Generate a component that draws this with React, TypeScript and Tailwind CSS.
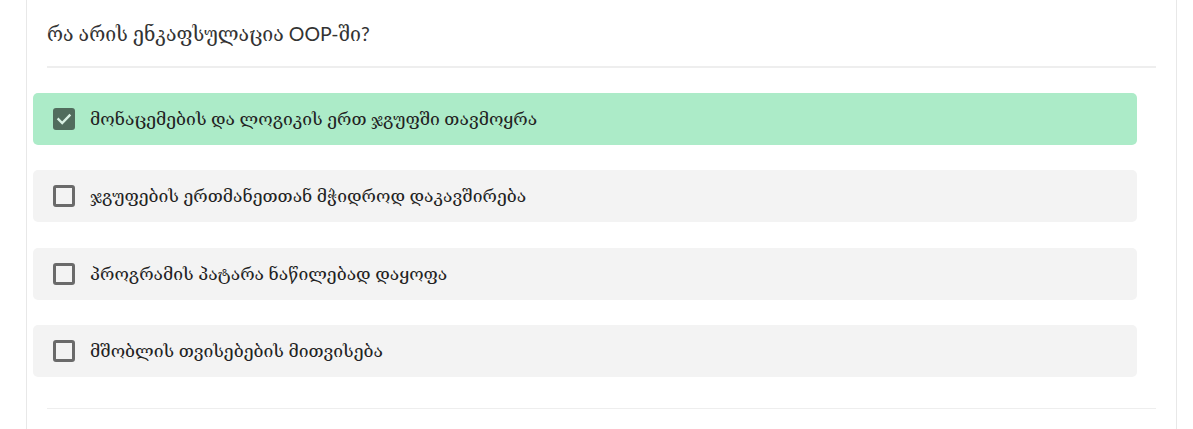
import React from "react";

const options = [
  { text: "მონაცემების და ლოგიკის ერთ ჯგუფში თავმოყრა", checked: true },
  { text: "ჯგუფების ერთმანეთთან მჭიდროდ დაკავშირება", checked: false },
  { text: "პროგრამის პატარა ნაწილებად დაყოფა", checked: false },
  { text: "მშობლის თვისებების მითვისება", checked: false },
];

function CheckBox({ checked }: { checked: boolean }) {
  if (checked) {
    return (
      <div className="w-[22px] h-[22px] rounded-[3px] bg-[#516c5d] flex items-center justify-center shrink-0">
        <svg width="16" height="16" viewBox="0 0 16 16" fill="none">
          <path d="M2.5 8.3 L6.2 12 L13.5 4.5" stroke="#d9f0e3" strokeWidth="2.4" strokeLinecap="square" />
        </svg>
      </div>
    );
  }
  return <div className="w-[22px] h-[22px] rounded-[3px] border-[3px] border-[#6a6a6a] shrink-0" />;
}

export default function App() {
  return (
    <div className="w-[1193px] h-[429px] bg-white overflow-hidden pl-[26px]" style={{ fontFamily: "Lato, 'DejaVu Serif', serif" }}>
      <div className="w-[1151px] h-full border-x border-[#e8e8e8]">
        <div className="px-[20px]">
          <div className="pt-[20px] pb-[19px] text-[19.5px] leading-[27px] text-[#333333]">
            რა არის ენკაფსულაცია OOP-ში?
          </div>
          <div className="h-[2px] bg-[#eeeeee]" />
        </div>
        <div className="mt-[25px] ml-[6px] w-[1104px] flex flex-col gap-[25.33px]">
          {options.map((o) => (
            <div
              key={o.text}
              className={`h-[52px] rounded-[5px] flex items-center pl-[20px] gap-[15px] ${o.checked ? "bg-[#acebc8]" : "bg-[#f3f3f3]"}`}
            >
              <CheckBox checked={o.checked} />
              <span className="text-[17.5px] text-[#222222]">{o.text}</span>
            </div>
          ))}
        </div>
        <div className="px-[20px] mt-[31px]">
          <div className="h-[1px] bg-[#eeeeee]" />
        </div>
      </div>
    </div>
  );
}
